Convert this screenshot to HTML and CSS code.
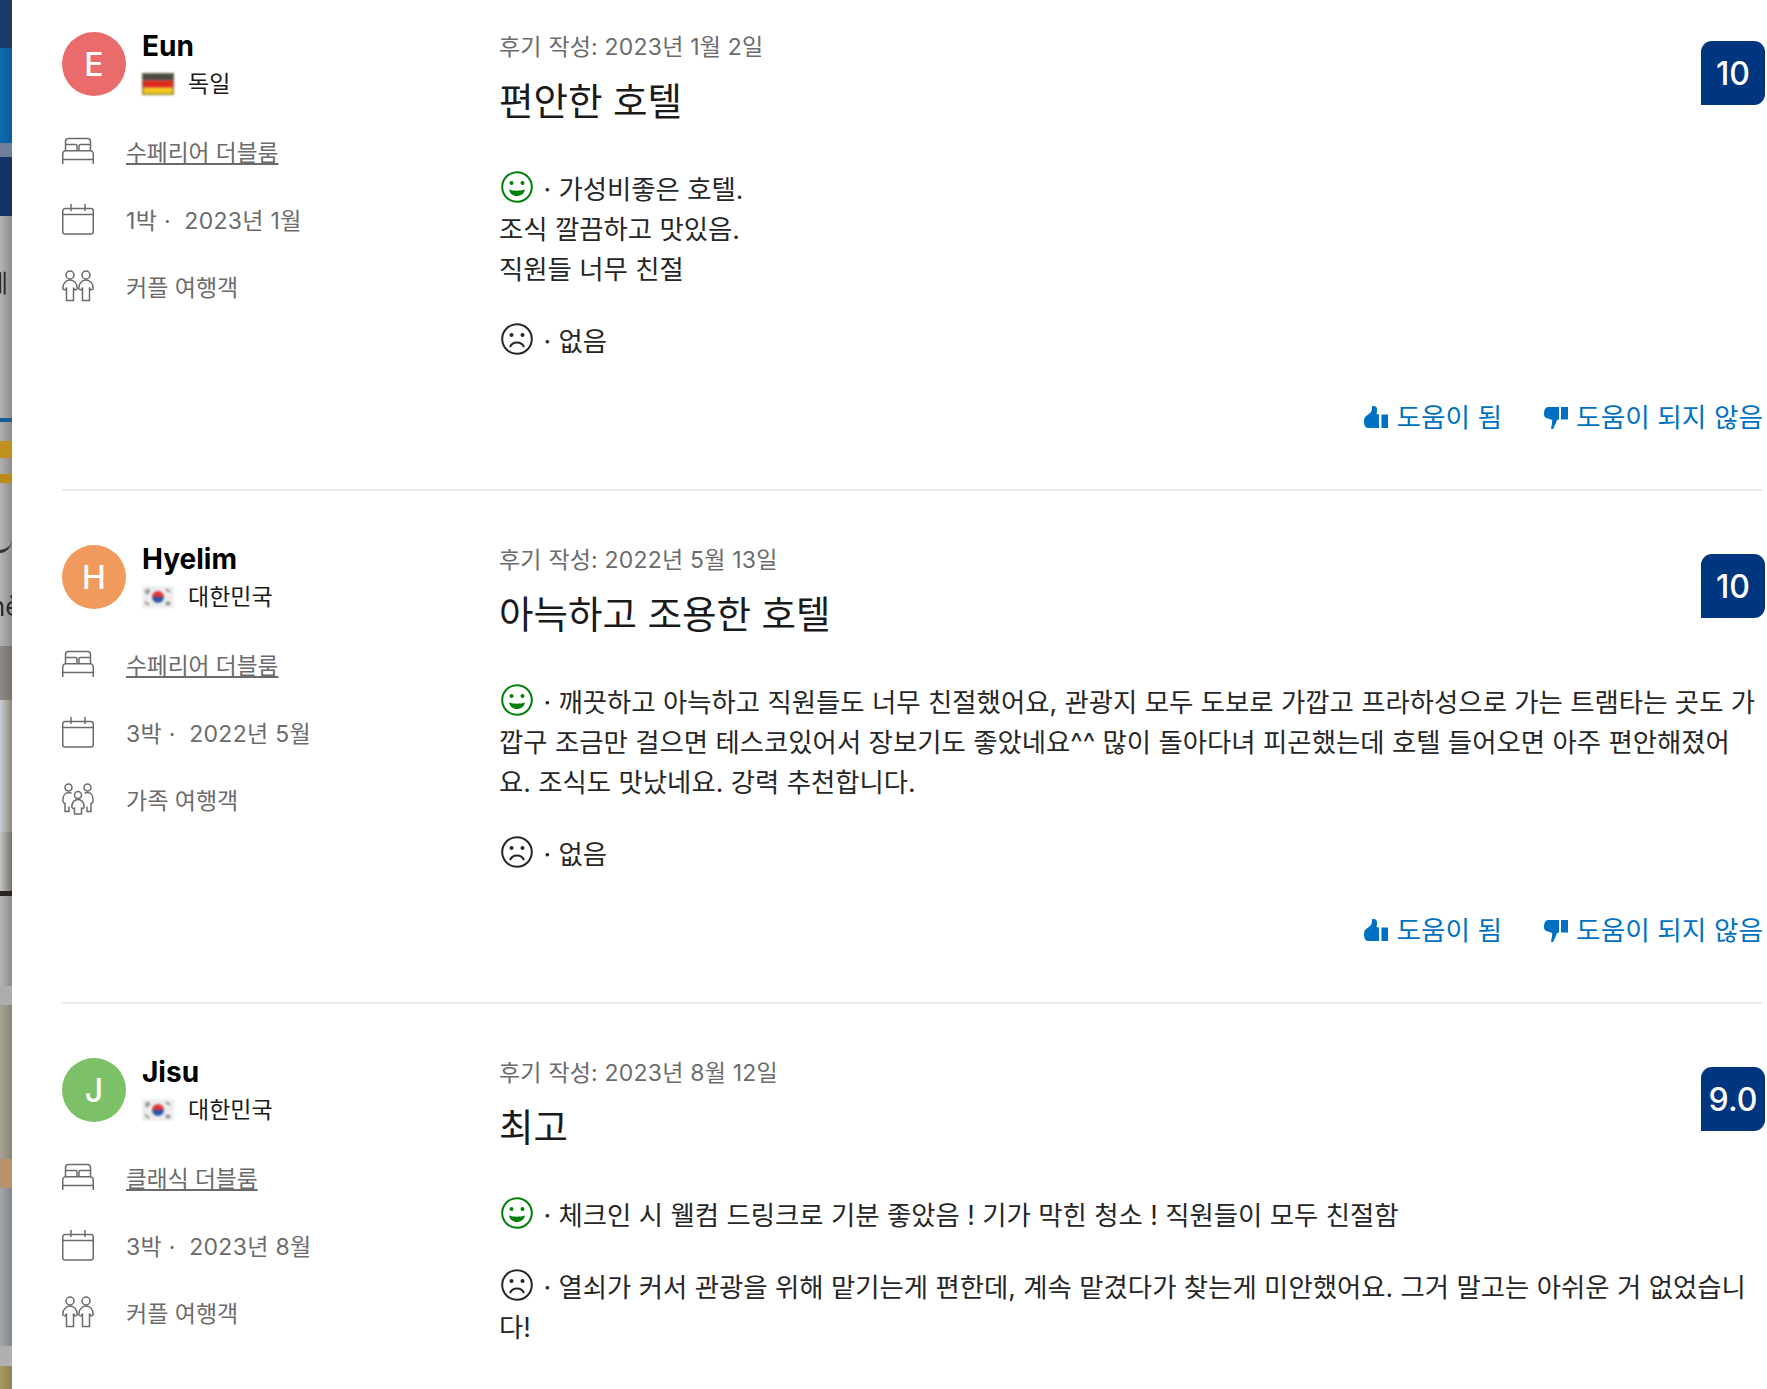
FILE: index.html
```html
<!DOCTYPE html>
<html lang="ko">
<head>
<meta charset="utf-8">
<title>후기</title>
<link rel="stylesheet" href="styles.css">
</head>
<body>
<svg class="defs" width="0" height="0" aria-hidden="true">
  <symbol id="i-bed" viewBox="0 0 32 32">
    <path d="M3.500 15.500V6.500a3 3 0 0 1 3-3h19a3 3 0 0 1 3 3v9M3.500 9.500h10a1.500 1.500 0 0 1 1.500 1.500v4.500M28.500 9.500h-10a1.500 1.500 0 0 0-1.500 1.500v4.500M4 15.750h24a3 3 0 0 1 3.250 3v10.250M.75 29v-10.250a3 3 0 0 1 3.250-3M.75 24.500h30.500"/>
  </symbol>
  <symbol id="i-cal" viewBox="0 0 32 32">
    <path d="M3 5.500h26a2.250 2.250 0 0 1 2.250 2.250v21a2.250 2.250 0 0 1-2.250 2.250H3a2.250 2.250 0 0 1-2.250-2.250v-21A2.250 2.250 0 0 1 3 5.500zM.75 11.500h30.500M9 1v7M23 1v7"/>
  </symbol>
  <symbol id="i-couple" viewBox="0 0 32 32">
    <circle cx="8" cy="5" r="4"/><circle cx="24" cy="5" r="4"/>
    <path d="M.8 18.500c0-5 3-8.500 7.200-8.500s7.200 3.500 7.200 8.500c0 1.500-2.700 1.500-3 .5l-.7-1.500v13H4.500v-13l-.7 1.500c-.3 1-3 1-3-.5z"/>
    <path d="M16.800 18.500c0-5 3-8.500 7.200-8.500s7.200 3.500 7.200 8.500c0 1.500-2.700 1.500-3 .5l-.7-1.500v13h-7v-13l-.7 1.500c-.3 1-3 1-3-.5z"/>
  </symbol>
  <symbol id="i-family" viewBox="0 0 32 32">
    <circle cx="6.500" cy="4.500" r="3.500"/><circle cx="25.500" cy="4.500" r="3.500"/><circle cx="16" cy="12" r="3.500"/>
    <path d="M9.500 10.500c-.8-.7-1.800-1-3-1-3.500 0-5.700 3.500-5.700 8 0 1.500.8 2.500 2.200 3v8h4v-5"/>
    <path d="M22.500 10.500c.8-.7 1.800-1 3-1 3.500 0 5.700 3.500 5.700 8 0 1.500-.8 2.500-2.200 3v8h-4v-5"/>
    <path d="M9.800 24c0-4.500 2.700-7.500 6.200-7.500s6.200 3 6.200 7.500c0 1-1.500 1.800-2.700 1.200V31h-7v-5.800c-1.200.6-2.700-.2-2.700-1.200z"/>
  </symbol>
  <symbol id="i-smile" viewBox="0 0 32 32">
    <circle class="face" cx="16" cy="16" r="14.800"/>
    <circle class="dot" cx="10.500" cy="12" r="2"/><circle class="dot" cx="21.500" cy="12" r="2"/>
    <path class="dot" d="M8 18.500c2.500.8 5 1.200 8 1.200s5.500-.4 8-1.200c-.8 4.200-4.100 6.500-8 6.500s-7.200-2.300-8-6.500z"/>
  </symbol>
  <symbol id="i-sad" viewBox="0 0 32 32">
    <circle class="face" cx="16" cy="16" r="14.800"/>
    <circle class="dot" cx="10.500" cy="12" r="2"/><circle class="dot" cx="21.500" cy="12" r="2"/>
    <path class="face" d="M9 24c1.300-3 3.800-4.500 7-4.500s5.700 1.500 7 4.500"/>
  </symbol>
  <symbol id="i-up" viewBox="0 0 24 24">
    <path d="M0 16c0-3.500 1.500-5 4-6.200L7 7c1-1.800 1-3.800 1-5.500C9 .5 12 1 12.800 3c.5 2 .2 4-.3 6L15 9.500V23H4c-2.800 0-4-3-4-7zM17.500 9.500H24V23h-6.500z"/>
  </symbol>
  <symbol id="i-down" viewBox="0 0 24 24">
    <path d="M0 9c0-4 1.500-7 4-7h11v12.500l-2 .5c-1 3-2.500 6-4 9.500L7 23.500c.5-2.500 1.200-5 1.200-8.500L4 13.500C1.500 13 0 12 0 9zM17 2h7v12.500h-7z"/>
  </symbol>
  <symbol id="f-kr" viewBox="0 0 32 22">
    <rect width="32" height="22" fill="#eeeeee"/>
    <path d="M10 11a6 6 0 0 1 12 0z" fill="#e0343a"/>
    <path d="M10 11a6 6 0 0 0 12 0z" fill="#2a56a8"/>
    <path d="M3 6l4-3M4 8l4-3M24 3l4 3M24 16l4 3M3 16l4 3M24 19l4-3" stroke="#666" stroke-width="1.500"/>
  </symbol>
</svg>

<div class="page">
  <div class="strip" aria-hidden="true">
    <div class="seg seg-navy-a"></div>
    <div class="seg seg-blue"></div>
    <div class="seg seg-rule"></div>
    <div class="seg seg-navy-b"></div>
    <div class="seg seg-grey-a"><span class="strip-text">제</span></div>
    <div class="seg seg-line"></div>
    <div class="seg seg-grey-b"></div>
    <div class="seg seg-gold-a"></div>
    <div class="seg seg-grey-c"></div>
    <div class="seg seg-gold-b"></div>
    <div class="seg seg-grey-d"><span class="strip-curve"></span><span class="strip-text strip-text-b">hè</span></div>
    <div class="seg seg-photo-a"></div>
    <div class="seg seg-photo-c"></div>
    <div class="seg seg-photo-d"></div>
    <div class="seg seg-photo-e"></div>
    <div class="seg seg-photo-f"></div>
    <div class="seg seg-photo-g"></div>
    <div class="seg seg-photo-h"></div>
    <div class="seg seg-photo-i"></div>
    <div class="seg seg-photo-j"></div>
    <div class="seg seg-photo-k"></div>
    <div class="seg seg-photo-l"></div>
  </div>

  <main class="list">
    <article class="review">
      <aside class="who">
        <div class="person">
          <div class="avatar avatar-e">E</div>
          <div class="person-text">
            <div class="name">Eun</div>
            <div class="country">
              <svg class="flag" viewBox="0 0 32 22"><rect width="32" height="7.330" fill="#4a4a4a"/><rect y="7.330" width="32" height="7.340" fill="#dd2a1f"/><rect y="14.670" width="32" height="7.330" fill="#f5c61c"/><rect x=".75" y=".75" width="30.500" height="20.500" fill="none" stroke="#6b6b45" stroke-opacity=".7" stroke-width="1.500"/></svg>
              <span>독일</span>
            </div>
          </div>
        </div>
        <div class="meta"><svg class="mi"><use href="#i-bed"/></svg><a class="room" href="#">수페리어 더블룸</a></div>
        <div class="meta"><svg class="mi"><use href="#i-cal"/></svg><span class="stay">1박 · &nbsp;2023년 1월</span></div>
        <div class="meta"><svg class="mi"><use href="#i-couple"/></svg><span>커플 여행객</span></div>
      </aside>
      <div class="body">
        <div class="head">
          <div>
            <div class="date">후기 작성: 2023년 1월 2일</div>
            <h2 class="title">편안한 호텔</h2>
          </div>
          <div class="score">10</div>
        </div>
        <p class="say"><svg class="fi good"><use href="#i-smile"/></svg> · 가성비좋은 호텔.<br>조식 깔끔하고 맛있음.<br>직원들 너무 친절</p>
        <p class="say"><svg class="fi bad"><use href="#i-sad"/></svg> · 없음</p>
        <div class="votes">
          <a class="vote" href="#"><svg class="vi"><use href="#i-up"/></svg>도움이 됨</a>
          <a class="vote" href="#"><svg class="vi"><use href="#i-down"/></svg>도움이 되지 않음</a>
        </div>
      </div>
    </article>

    <article class="review">
      <aside class="who">
        <div class="person">
          <div class="avatar avatar-h">H</div>
          <div class="person-text">
            <div class="name">Hyelim</div>
            <div class="country">
              <svg class="flag"><use href="#f-kr"/></svg>
              <span>대한민국</span>
            </div>
          </div>
        </div>
        <div class="meta"><svg class="mi"><use href="#i-bed"/></svg><a class="room" href="#">수페리어 더블룸</a></div>
        <div class="meta"><svg class="mi"><use href="#i-cal"/></svg><span class="stay">3박 · &nbsp;2022년 5월</span></div>
        <div class="meta"><svg class="mi"><use href="#i-family"/></svg><span>가족 여행객</span></div>
      </aside>
      <div class="body">
        <div class="head">
          <div>
            <div class="date">후기 작성: 2022년 5월 13일</div>
            <h2 class="title">아늑하고 조용한 호텔</h2>
          </div>
          <div class="score">10</div>
        </div>
        <p class="say"><svg class="fi good"><use href="#i-smile"/></svg> · 깨끗하고 아늑하고 직원들도 너무 친절했어요, 관광지 모두 도보로 가깝고 프라하성으로 가는 트램타는 곳도 가깝구 조금만 걸으면 테스코있어서 장보기도 좋았네요^^ 많이 돌아다녀 피곤했는데 호텔 들어오면 아주 편안해졌어요. 조식도 맛났네요. 강력 추천합니다.</p>
        <p class="say"><svg class="fi bad"><use href="#i-sad"/></svg> · 없음</p>
        <div class="votes">
          <a class="vote" href="#"><svg class="vi"><use href="#i-up"/></svg>도움이 됨</a>
          <a class="vote" href="#"><svg class="vi"><use href="#i-down"/></svg>도움이 되지 않음</a>
        </div>
      </div>
    </article>

    <article class="review">
      <aside class="who">
        <div class="person">
          <div class="avatar avatar-j">J</div>
          <div class="person-text">
            <div class="name">Jisu</div>
            <div class="country">
              <svg class="flag"><use href="#f-kr"/></svg>
              <span>대한민국</span>
            </div>
          </div>
        </div>
        <div class="meta"><svg class="mi"><use href="#i-bed"/></svg><a class="room" href="#">클래식 더블룸</a></div>
        <div class="meta"><svg class="mi"><use href="#i-cal"/></svg><span class="stay">3박 · &nbsp;2023년 8월</span></div>
        <div class="meta"><svg class="mi"><use href="#i-couple"/></svg><span>커플 여행객</span></div>
      </aside>
      <div class="body">
        <div class="head">
          <div>
            <div class="date">후기 작성: 2023년 8월 12일</div>
            <h2 class="title">최고</h2>
          </div>
          <div class="score">9.0</div>
        </div>
        <p class="say"><svg class="fi good"><use href="#i-smile"/></svg> · 체크인 시 웰컴 드링크로 기분 좋았음 ! 기가 막힌 청소 ! 직원들이 모두 친절함</p>
        <p class="say"><svg class="fi bad"><use href="#i-sad"/></svg> · 열쇠가 커서 관광을 위해 맡기는게 편한데, 계속 맡겼다가 찾는게 미안했어요. 그거 말고는 아쉬운 거 없었습니다!</p>
      </div>
    </article>
  </main>
</div>
</body>
</html>
```

FILE: styles.css
```css
* { box-sizing: border-box; }
html, body { margin: 0; padding: 0; background: #fff; }
body {
  font-family: Inter, "Noto Sans CJK KR", "Liberation Sans", sans-serif;
  color: #262626;
  height: 1389px;
  overflow: hidden;
}
.defs { display: block; height: 0; }

.page { display: flex; height: 1389px; overflow: hidden; }

/* page behind the panel, seen at its left edge */
.strip { flex: 0 0 12px; display: flex; flex-direction: column; overflow: hidden; filter: blur(.5px); }
.seg { flex: none; overflow: hidden; white-space: nowrap; }
.seg-navy-a { height: 48px; background: linear-gradient(90deg, #16386f, #24395f); }
.seg-blue { height: 95px; background: linear-gradient(90deg, #0e6cb0, #115a98); }
.seg-rule { height: 14px; background: #6f7f97; }
.seg-navy-b { height: 59px; background: linear-gradient(90deg, #12356e, #17305f); }
.seg-grey-a { height: 202px; padding-top: 54px; background: linear-gradient(90deg, #b4b4b4, #8c8c8c); }
.seg-line { height: 4px; background: #175c95; }
.seg-grey-b { height: 19px; background: linear-gradient(90deg, #b0b0b0, #8c8c8c); }
.seg-gold-a { height: 17px; background: #bf921f; }
.seg-grey-c { height: 16px; background: linear-gradient(90deg, #b0b0b0, #8c8c8c); }
.seg-gold-b { height: 9px; background: #b98c16; }
.seg-grey-d { height: 163px; background: linear-gradient(90deg, #b4b4b4, #8e8e8e); }
.seg-photo-a { height: 54px; background: linear-gradient(90deg, #8e8b88, #7b7068); }
.seg-photo-c { height: 132px; background: linear-gradient(90deg, #c9d0d6, #8d8578); }
.seg-photo-d { height: 59px; background: linear-gradient(90deg, #c5c4bd, #74716b); }
.seg-photo-e { height: 5px; background: #2a2522; }
.seg-photo-f { height: 90px; background: linear-gradient(90deg, #b5b6b8, #8b8b8f); }
.seg-photo-g { height: 19px; background: #adadad; }
.seg-photo-h { height: 154px; background: linear-gradient(90deg, #a8a493, #8a8478); }
.seg-photo-i { height: 29px; background: #b8916f; }
.seg-photo-j { height: 158px; background: linear-gradient(90deg, #a4a8ae, #80858d); }
.seg-photo-k { height: 20px; background: #b0b0b0; }
.seg-photo-l { height: 23px; background: linear-gradient(90deg, #a8985e, #8d8454); }

.strip-text { display: block; margin-left: -14px; font-size: 24px; line-height: 28px; color: #2b2b2b; }
.strip-text-b { margin-left: -10px; margin-top: 40px; font-size: 26px; }
.strip-curve { display: block; height: 50px; margin: 20px 0 0 -14px; width: 26px; border-bottom: 3px solid #333; border-radius: 0 0 18px 18px; }

.list { flex: 1; min-width: 0; padding: 0 4px 0 50px; }

.review {
  display: grid;
  grid-template-columns: 437px minmax(0, 1fr);
  height: 491px;
  margin-bottom: 22px;
  padding-top: 32px;
  border-bottom: 2px solid #ececec;
}
.review:last-child { border-bottom: 0; }

.person { display: flex; gap: 16px; height: 64px; margin-bottom: 21.500px; }
.avatar {
  flex: none; width: 64px; height: 64px; border-radius: 50%;
  display: flex; align-items: center; justify-content: center;
  color: #fff; font-size: 32px; font-weight: 500;
}
.avatar-e { background: #e96b6b; }
.avatar-h { background: #f09a5e; }
.avatar-j { background: #7cc067; }
.person-text { margin-top: -3px; }
.name { font-size: 28px; line-height: 34px; font-weight: 700; color: #000; }
.country { display: flex; align-items: center; gap: 14px; font-size: 23px; line-height: 32px; margin-top: 5px; color: #1a1a1a; }
.flag { width: 32px; height: 22px; flex: none; filter: blur(.8px); }

.meta { display: flex; align-items: center; gap: 32px; height: 67.500px; color: #6b6b6b; font-size: 23px; }
.mi { width: 32px; height: 32px; flex: none; fill: none; stroke: #6b6b6b; stroke-width: 1.500; overflow: visible; }
.room { color: #6b6b6b; font-size: 22.700px; text-decoration: underline; text-underline-offset: 2px; }
.stay { letter-spacing: .3px; }

.body { min-width: 0; }
.head { display: flex; justify-content: space-between; align-items: flex-start; margin-right: -2px; min-height: 105px; }
.date { color: #6b6b6b; font-size: 23px; line-height: 30px; letter-spacing: .2px; }
.title { margin: 14px 0 0; font-size: 37.500px; line-height: 52px; font-weight: 400; color: #1a1a1a; }
.score {
  flex: none; width: 64px; height: 64px; margin-top: 9px;
  background: #003580; color: #fff; font-size: 32px; font-weight: 500;
  display: flex; align-items: center; justify-content: center;
  border-radius: 11px 11px 11px 0;
}

.say { margin: 32px 0 0; padding-right: 6px; font-size: 26.400px; line-height: 40px; color: #262626; }
.fi { width: 32px; height: 32px; vertical-align: -4px; overflow: visible; margin: 0 3px 0 2px; }
.face { fill: none; stroke: currentColor; stroke-width: 2; }
.dot { fill: currentColor; stroke: none; }
.good { color: #008009; }
.bad { color: #262626; }

.votes { display: flex; justify-content: flex-end; gap: 42px; margin-top: 38px; }
.vote { display: flex; align-items: center; gap: 8px; font-size: 26.700px; line-height: 36px; color: #0071c2; text-decoration: none; }
.vi { width: 24px; height: 24px; fill: #0071c2; flex: none; }
```
